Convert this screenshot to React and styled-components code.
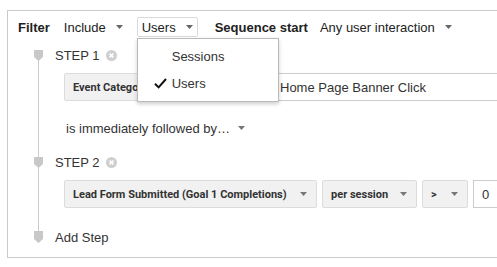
import styled, { createGlobalStyle } from 'styled-components';

const GlobalStyle = createGlobalStyle`
  html, body {
    margin: 0;
    padding: 0;
    background: #fff;
    overflow: hidden;
  }
  body {
    font-family: "Liberation Sans", Arial, sans-serif;
    font-size: 13px;
    color: #333;
  }
`

// piccola freccia dei menu a tendina
const Arrow = ({ color = '#777' }) => (
    <svg width="7" height="4" viewBox="0 0 7 4" style={{ flex: 'none' }}>
        <polygon points="0,0 7,0 3.5,4" fill={color} />
    </svg>
)

const CloseIcon = () => (
    <svg width="11" height="11" viewBox="0 0 11 11">
        <circle cx="5.5" cy="5.5" r="5.5" fill="#cfcfcf" />
        <path d="M3.6 3.6 L7.4 7.4 M7.4 3.6 L3.6 7.4" stroke="#fff" strokeWidth="1.5" />
    </svg>
)

const Marker = ({ h = 11 }) => (
    <MarkerSvg width="9" height={h} viewBox={`0 0 9 ${h}`}>
        <polygon points={`0,0 9,0 9,${h - 4} 4.5,${h} 0,${h - 4}`} fill="#c8c8c8" />
    </MarkerSvg>
)

const Check = () => (
    <svg width="13" height="11" viewBox="0 0 13 11">
        <path d="M1 5.8 L4.6 9.4 L12 1" fill="none" stroke="#111" strokeWidth="2" />
    </svg>
)

function App() {
    return (
        <>
        <GlobalStyle />
        <Panel>
            <Header>
                <Label $mr={9}>Filter</Label>
                <Select $mr={9}>
                    Include <Arrow color="#666" />
                </Select>
                <Select $mr={17} $open>
                    Users <Arrow color="#666" />
                    <Menu>
                        <MenuItem><CheckSlot /> Sessions</MenuItem>
                        <MenuItem><CheckSlot><Check /></CheckSlot> Users</MenuItem>
                    </Menu>
                </Select>
                <Label $mr={7}>Sequence start</Label>
                <Select>
                    Any user interaction <Arrow color="#666" />
                </Select>
            </Header>

            <Timeline>
                <StepHead>
                    <Marker />
                    <StepTitle>STEP 1</StepTitle>
                    <CloseIcon />
                </StepHead>
                <StepBody>
                    <Field $w={130}>Event Category <Arrow /></Field>
                    <Field $w={71}>exactly <Arrow /></Field>
                    <TextInput $pl={4}>Home Page Banner Click</TextInput>
                </StepBody>

                <Followed>
                    is immediately followed by… <Arrow />
                </Followed>

                <StepHead $mt={21}>
                    <Marker />
                    <StepTitle>STEP 2</StepTitle>
                    <CloseIcon />
                </StepHead>
                <StepBody>
                    <Field $w={253}>Lead Form Submitted (Goal 1 Completions) <Arrow /></Field>
                    <Field $w={95}>per session <Arrow /></Field>
                    <Field $w={46}>&gt; <Arrow /></Field>
                    <TextInput $pl={8}>0</TextInput>
                </StepBody>

                <AddStep>
                    <Marker h={12} />
                    Add Step
                </AddStep>
            </Timeline>
        </Panel>
        </>
    )
}

const Panel = styled.div`
    margin: 10px 0 0 7px;
    width: 560px;
    box-sizing: border-box;
    border: 1px solid #cacaca;
    padding: 6px 0 14px 10px;
    background: #fff;
`

const Header = styled.div`
    display: flex;
    align-items: center;
    height: 20px;
    position: relative;
    z-index: 2;
    color: #222;
`

const Label = styled.span`
    font-weight: bold;
    margin-right: ${props => props.$mr || 0}px;
`

const Select = styled.div`
    position: relative;
    display: inline-flex;
    align-items: center;
    gap: 10px;
    height: 20px;
    box-sizing: border-box;
    padding: 0 4px;
    border: 1px solid ${props => props.$open ? '#dadada' : 'transparent'};
    border-radius: 2px;
    margin-right: ${props => props.$mr || 0}px;
`

const Menu = styled.div`
    position: absolute;
    top: 20px;
    left: -1px;
    width: 142px;
    box-sizing: border-box;
    padding: 4px 0;
    background: #fff;
    border: 1px solid #bbb;
    box-shadow: 0 2px 4px rgba(0, 0, 0, 0.2);
    z-index: 10;
`

const MenuItem = styled.div`
    display: flex;
    align-items: center;
    height: 27px;
    padding-left: 16px;
    color: #333;
`

const CheckSlot = styled.span`
    display: inline-flex;
    width: 18px;
    flex: none;
`

const Timeline = styled.div`
    margin: 13px 0 0 16px;
    background: linear-gradient(#cacaca, #cacaca) no-repeat 4px 0 / 1px 100%;
`

const MarkerSvg = styled.svg`
    flex: none;
    margin-right: 12px;
`

const StepHead = styled.div`
    display: flex;
    align-items: center;
    height: 11px;
    margin-top: ${props => props.$mt || 0}px;
`

const StepTitle = styled.span`
    margin-right: 6px;
    color: #333;
    line-height: 15px;
`

const StepBody = styled.div`
    display: flex;
    gap: 5px;
    margin-top: 12px;
    padding-left: 30px;
`

const Field = styled.div`
    flex: none;
    display: flex;
    align-items: center;
    justify-content: space-between;
    box-sizing: border-box;
    width: ${props => props.$w}px;
    height: 28px;
    padding: 0 9px 0 8px;
    background: #f1f1f1;
    border: 1px solid #dcdcdc;
    border-radius: 2px;
    font-family: Roboto, "Liberation Sans", sans-serif;
    font-weight: bold;
    font-size: 11px;
    color: #333;
    white-space: nowrap;
    overflow: hidden;
`

const TextInput = styled.div`
    flex: 1;
    display: flex;
    align-items: center;
    box-sizing: border-box;
    height: 28px;
    padding-left: ${props => props.$pl}px;
    background: #fff;
    border: 1px solid #cccccc;
    color: #333;
    white-space: nowrap;
`

const Followed = styled.div`
    display: flex;
    align-items: center;
    gap: 8px;
    height: 16px;
    margin-top: 19px;
    padding-left: 32px;
    color: #333;
`

const AddStep = styled.div`
    display: flex;
    align-items: center;
    height: 12px;
    margin-top: 23px;
    color: #333;
`

export default App
